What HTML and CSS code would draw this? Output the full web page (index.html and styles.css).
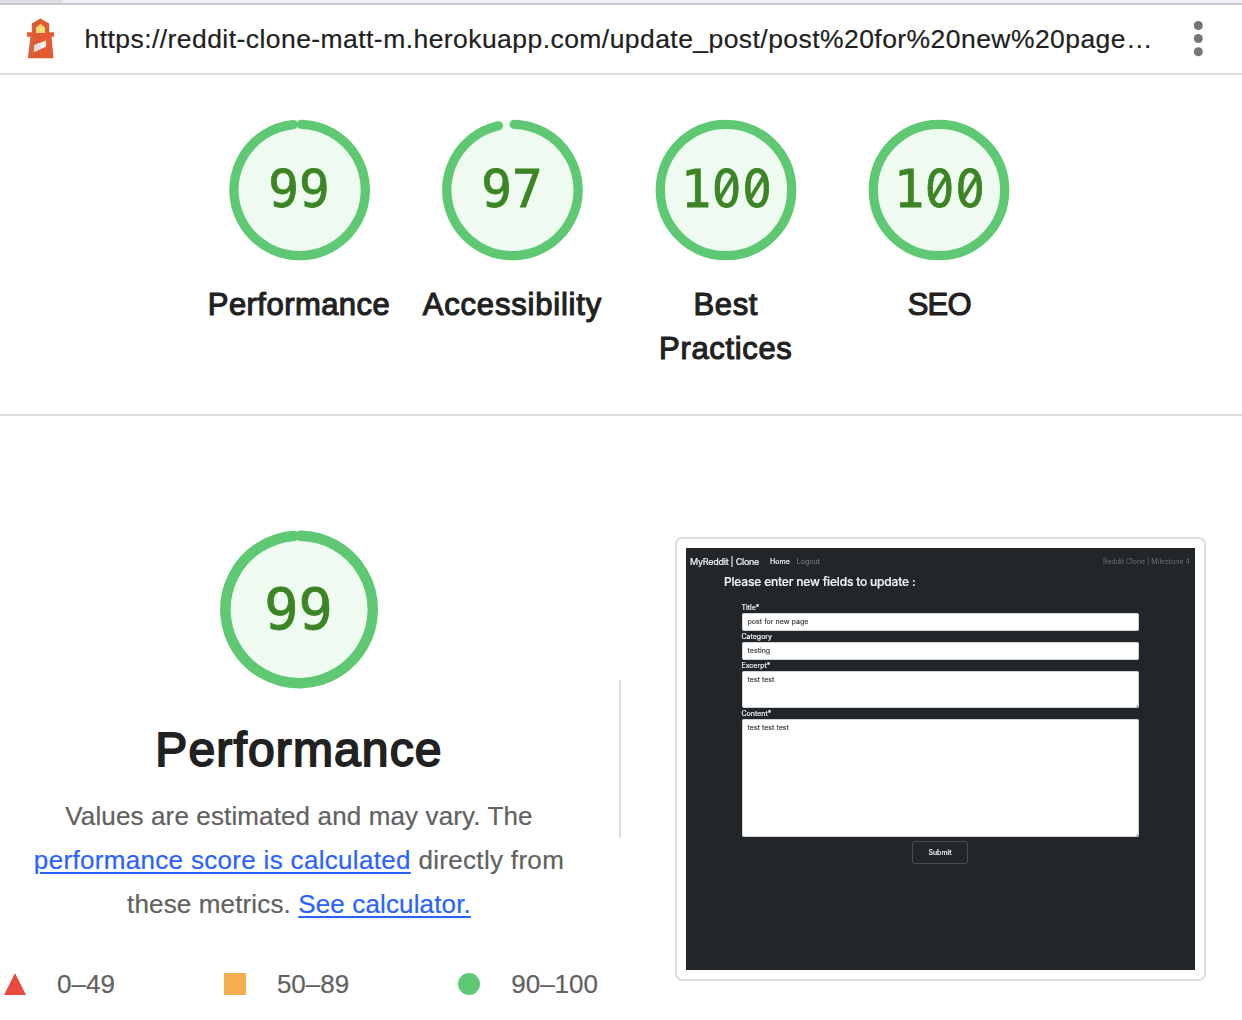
FILE: index.html
```html
<!DOCTYPE html>
<html lang="en">
<head>
<meta charset="utf-8">
<title>Lighthouse Report</title>
<link rel="stylesheet" href="styles.css">
</head>
<body>
<div class="tabstrip"><div class="tab"></div></div>
<header class="topbar">
  <svg class="logo" width="28" height="41" viewBox="0 0 28 41">
    <defs>
      <linearGradient id="body" x1="0" x2="1"><stop offset="0" stop-color="#e2603c"/><stop offset=".46" stop-color="#d9572f"/><stop offset=".5" stop-color="#e65a31"/><stop offset="1" stop-color="#e65b34"/></linearGradient>
    </defs>
    <path fill="url(#body)" d="M13.500 .4 22.200 5.500V14.300H27V18.700H24.600L26.500 40.300H.8L3.500 18.700H0V14.300H4.800V5.500Z"/>
    <path fill="#f8e47c" d="M13.500 6 18 9.800V15H9V9.800Z"/>
    <path fill="#f4d56d" d="M9 9.800 13.500 6V15H9Z"/>
    <path fill="#f3f1f1" d="M7.500 27 19 22.400V28.700L6.800 34Z"/>
    <path fill="#e2dfdf" d="M7.500 27 13.500 24.600V31L6.800 34Z"/>
  </svg>
  <div class="url">https://reddit-clone-matt-m.herokuapp.com/update_post/post%20for%20new%20page…</div>
  <svg class="kebab" width="10" height="36" viewBox="0 0 10 36" fill="#757575"><circle cx="5.300" cy="4.500" r="4.500"/><circle cx="5.300" cy="17.500" r="4.500"/><circle cx="5.300" cy="30.700" r="4.500"/></svg>
</header>

<section class="scores">
  <div class="score">
    <svg class="gauge" viewBox="-71 -71 142 142">
      <circle class="base" r="70"/>
      <path class="arc" d="M2.200-65.700A65.700 65.700 0 1 1-5.800-65.400"/>
      <text class="num" y="17">99</text>
    </svg>
    <div class="label w-performance">Performance</div>
  </div>
  <div class="score">
    <svg class="gauge" viewBox="-71 -71 142 142">
      <circle class="base" r="70"/>
      <path class="arc" d="M2.200-65.700A65.700 65.700 0 1 1-13.600-64.200"/>
      <text class="num" y="17">97</text>
    </svg>
    <div class="label w-accessibility">Accessibility</div>
  </div>
  <div class="score">
    <svg class="gauge" viewBox="-71 -71 142 142">
      <circle class="base" r="70"/>
      <circle class="arc" r="65.700"/>
      <text class="num" x="-30" y="17">1<tspan class="zero" x=".5">0</tspan><tspan class="zero" x="31">0</tspan></text>
      <path class="slash" d="M-6.500 9 7-13M24 9 37.500-13"/>
    </svg>
    <div class="label w-best">Best<br>Practices</div>
  </div>
  <div class="score">
    <svg class="gauge" viewBox="-71 -71 142 142">
      <circle class="base" r="70"/>
      <circle class="arc" r="65.700"/>
      <text class="num" x="-30" y="17">1<tspan class="zero" x=".5">0</tspan><tspan class="zero" x="31">0</tspan></text>
      <path class="slash" d="M-6.500 9 7-13M24 9 37.500-13"/>
    </svg>
    <div class="label w-seo">SEO</div>
  </div>
</section>

<main class="category">
  <div class="summary">
    <svg class="gauge-large" viewBox="-79.500 -80.500 160 160">
      <circle class="base" r="78.500"/>
      <path class="arc arc-large" d="M2-73.700A73.700 73.700 0 1 1-5-73.500"/>
      <text class="num num-large" y="20">99</text>
    </svg>
    <h1 class="title">Performance</h1>
    <p class="desc"><span class="line1">Values are estimated and may vary. The</span><br><span class="line2"><a class="link">performance score is calculated</a> directly from</span><br><span class="line3">these metrics. <a class="link">See calculator.</a></span></p>
    <div class="legend">
      <div class="key"><svg width="22" height="22"><path fill="#eb4a40" d="M11 0 22 22H0Z"/></svg><span>0–49</span></div>
      <div class="key"><svg width="22" height="22"><path fill="#f2ae4f" d="M0 0H22V22H0Z"/></svg><span>50–89</span></div>
      <div class="key"><svg width="22" height="22"><circle fill="#5ec972" cx="11" cy="11" r="11"/></svg><span>90–100</span></div>
    </div>
  </div>
  <div class="divider"></div>
  <div class="frame">
    <div class="preview">
      <nav class="nav"><span class="brand">MyReddit | Clone</span><span class="home">Home</span><span class="logout">Logout</span><span class="course">Reddit Clone | Milestone 4</span></nav>
      <h2 class="prompt">Please enter new fields to update :</h2>
      <div class="form">
        <div class="flabel">Title*</div><div class="field">post for new page</div>
        <div class="flabel">Category</div><div class="field">testing</div>
        <div class="flabel">Excerpt*</div><div class="field area">test test</div>
        <div class="flabel">Content*</div><div class="field area tall">test test test</div>
      </div>
      <div class="submit">Submit</div>
    </div>
  </div>
</main>
</body>
</html>
```
FILE: styles.css
```css
* { box-sizing: border-box; }
body { margin: 0; height: 1020px; overflow: hidden; background: #fff; color: #212121; font-family: "Liberation Sans", Arial, sans-serif; }
svg { display: block; flex: none; }

.tabstrip { height: 5px; background: #f0f0f4; border-bottom: 2px solid #c9c9cd; }
.tab { width: 63px; height: 3px; background: #dedfe4; border-radius: 0 0 4px 0; }
.topbar { display: flex; height: 70px; border-bottom: 2px solid #dedede; padding-left: 27px; }
.logo { margin-top: 13px; }
.url { width: 1109px; margin-left: 29.500px; font-size: 26.500px; line-height: 68px; white-space: nowrap; letter-spacing: .44px; -webkit-text-stroke: .2px #212121; }
.kebab { margin-top: 16px; margin-left: -.5px; }

.scores { display: flex; height: 341px; padding: 44px 0 0 192.300px; border-bottom: 2px solid #dedede; }
.score { width: 213.400px; display: flex; flex-direction: column; align-items: center; }
.gauge { width: 142px; height: 142px; }
.base { fill: #effaf1; }
.arc { fill: none; stroke: #5ec972; stroke-width: 9.300px; stroke-linecap: round; }
.arc-large { stroke-width: 10.500px; }
.num { font-family: "DejaVu Sans Mono", monospace; font-size: 51px; fill: #3b8524; stroke: #3b8524; stroke-width: .8px; text-anchor: middle; }
.zero { font-family: "DejaVu Sans Condensed", "DejaVu Sans", sans-serif; font-stretch: condensed; }
.num-large { font-size: 57px; }
.slash { stroke: #3b8524; stroke-width: 4px; fill: none; }
.label { margin-top: 22px; font-size: 31px; line-height: 44px; text-align: center; -webkit-text-stroke: 1.100px #212121; white-space: nowrap; }
.w-performance { letter-spacing: .45px; }
.w-accessibility { letter-spacing: .8px; }
.w-best { letter-spacing: .65px; }
.w-seo { letter-spacing: -.8px; }

.category { display: flex; height: 604px; }
.summary { width: 598px; display: flex; flex-direction: column; align-items: center; padding-top: 113px; flex: none; }
.gauge-large { width: 160px; height: 160px; }
.title { margin: 29px 0 0; font-size: 48px; line-height: 64px; font-weight: 400; letter-spacing: 1.150px; -webkit-text-stroke: 1.800px #212121; }
.desc { margin: 12px 0 0; font-size: 26px; line-height: 44px; color: #616161; text-align: center; white-space: nowrap; -webkit-text-stroke: .2px; }
.line1 { letter-spacing: .13px; }
.line2 { letter-spacing: .32px; }
.line3 { letter-spacing: .14px; }
.link { color: #2962ff; text-decoration: underline; text-decoration-thickness: 2px; text-underline-offset: 3px; }
.legend { width: 594px; margin: 36px 0 0 4px; display: flex; justify-content: space-between; color: #616161; font-size: 26px; line-height: 44px; -webkit-text-stroke: .2px; }
.key { display: flex; align-items: center; gap: 31px; }
.divider { width: 2px; height: 158px; margin: 264px 0 0 21px; background: #dedede; flex: none; }
.frame { width: 531px; height: 444px; margin: 121px 0 0 54px; border: 2px solid #dedede; border-radius: 7px; padding: 9px; flex: none; }

.preview { width: 509px; height: 422px; background: #222629; font-family: Inter, sans-serif; color: #f4f4f4; overflow: hidden; }
.nav { display: flex; align-items: center; height: 26px; padding: 0 5px 0 4px; white-space: nowrap; filter: blur(.3px); }
.brand { font-size: 9px; letter-spacing: -.25px; -webkit-text-stroke: .2px; }
.home { font-size: 7px; margin-left: 11px; -webkit-text-stroke: .2px; }
.logout { font-size: 7px; margin-left: 7px; color: #85888b; }
.course { font-size: 7px; margin-left: auto; color: #6c7073; }
.prompt { margin: 0 0 0 38px; height: 28.400px; line-height: 16px; font-size: 12px; font-weight: 500; letter-spacing: -.18px; -webkit-text-stroke: .2px; filter: blur(.3px); }
.form { width: 397px; margin-left: 55.500px; filter: blur(.3px); }
.flabel { height: 11px; line-height: 11px; font-size: 7px; -webkit-text-stroke: .2px; }
.field { height: 17.800px; border: 1px solid #ced4da; border-radius: 1.500px; background: #fff; color: #33373b; font-size: 7.100px; line-height: 16px; padding-left: 5px; -webkit-text-stroke: .15px; }
.area { height: 37.300px; background: linear-gradient(135deg, transparent 75%, #aaa 75%) right bottom / 4px 4px no-repeat #fff; }
.tall { height: 118px; }
.submit { width: 56px; height: 23px; margin: 4px auto 0 226px; border: 1px solid #484c50; border-radius: 3px; font-size: 7px; line-height: 21px; text-align: center; -webkit-text-stroke: .2px; filter: blur(.3px); }
```
